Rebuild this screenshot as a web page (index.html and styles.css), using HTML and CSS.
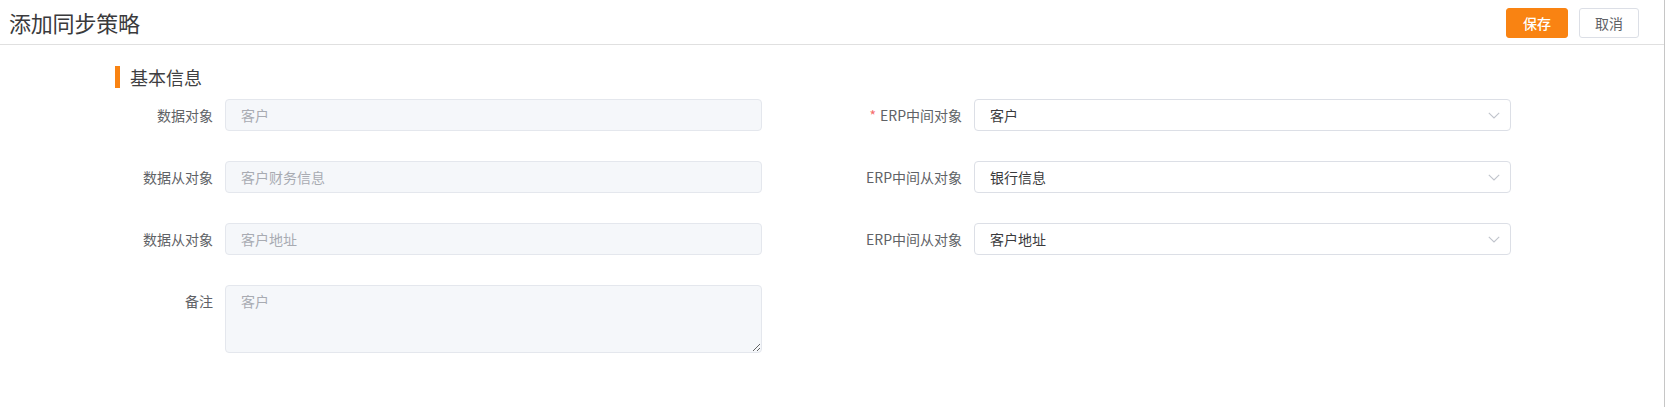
FILE: index.html
```html
<!DOCTYPE html>
<html lang="zh-CN">
<head>
<meta charset="utf-8">
<title>添加同步策略</title>
<link rel="stylesheet" href="styles.css">
</head>
<body>
<div class="page">
  <header class="topbar">
    <h1 class="title">添加同步策略</h1>
    <div class="actions">
      <button class="btn btn-primary" type="button">保存</button>
      <button class="btn btn-default" type="button">取消</button>
    </div>
  </header>
  <main class="content">
    <div class="section-title"><span class="bar"></span><span class="section-text">基本信息</span></div>
    <div class="form">
      <div class="field">
        <label class="label">数据对象</label>
        <div class="input disabled">客户</div>
      </div>
      <div class="field">
        <label class="label"><span class="req">*</span>ERP中间对象</label>
        <div class="input select"><span>客户</span><svg class="arrow" width="12" height="7" viewBox="0 0 12 7"><path d="M0.8 0.8 L6 6 L11.2 0.8" fill="none" stroke="#c0c4cc" stroke-width="1.1"/></svg></div>
      </div>
      <div class="field">
        <label class="label">数据从对象</label>
        <div class="input disabled">客户财务信息</div>
      </div>
      <div class="field">
        <label class="label">ERP中间从对象</label>
        <div class="input select"><span>银行信息</span><svg class="arrow" width="12" height="7" viewBox="0 0 12 7"><path d="M0.8 0.8 L6 6 L11.2 0.8" fill="none" stroke="#c0c4cc" stroke-width="1.1"/></svg></div>
      </div>
      <div class="field">
        <label class="label">数据从对象</label>
        <div class="input disabled">客户地址</div>
      </div>
      <div class="field">
        <label class="label">ERP中间从对象</label>
        <div class="input select"><span>客户地址</span><svg class="arrow" width="12" height="7" viewBox="0 0 12 7"><path d="M0.8 0.8 L6 6 L11.2 0.8" fill="none" stroke="#c0c4cc" stroke-width="1.1"/></svg></div>
      </div>
      <div class="field field-top">
        <label class="label">备注</label>
        <textarea class="textarea" placeholder="客户"></textarea>
      </div>
    </div>
  </main>
</div>
</body>
</html>
```
FILE: styles.css
```css
* { box-sizing: border-box; }
html, body { margin: 0; padding: 0; background: #fff; }
body {
  font-family: "Noto Sans CJK SC", "Noto Sans", sans-serif;
  color: #606266;
}
.page {
  width: 1665px;
  height: 407px;
  border-right: 1px solid #c6c6c6;
  overflow: hidden;
}
.topbar {
  height: 45px;
  border-bottom: 1px solid #e0e0e0;
  display: flex;
  align-items: center;
  justify-content: space-between;
  padding: 0 25px 0 9px;
}
.title {
  margin: 0;
  font-size: 22px;
  font-weight: 400;
  color: #3a3a3c;
  line-height: 30px;
  letter-spacing: -0.2px;
}
.actions { display: flex; gap: 11px; padding-top: 2px; }
.btn {
  height: 30px;
  border-radius: 3px;
  font-family: inherit;
  font-size: 14px;
  line-height: 28px;
  padding: 0;
  cursor: pointer;
}
.btn-primary {
  width: 62px;
  background: #f98312;
  border: 1px solid #f98312;
  color: #fff;
  font-weight: 500;
}
.btn-default {
  width: 60px;
  background: #fff;
  border: 1px solid #dcdfe6;
  color: #606266;
}
.content { padding: 21px 0 0 0; }
.section-title {
  display: flex;
  align-items: center;
  height: 22px;
  padding-left: 115px;
}
.bar { width: 5px; height: 22px; background: #f98312; }
.section-text {
  margin-left: 10px;
  font-size: 18px;
  color: #3f3f42;
  line-height: 22px;
}
.form {
  display: grid;
  grid-template-columns: 669px 657px;
  column-gap: 92px;
  row-gap: 30px;
  padding: 11px 0 0 93px;
}
.field { display: flex; align-items: center; }
.field-top { align-items: flex-start; }
.label {
  flex: 0 0 auto;
  width: 132px;
  padding-right: 12px;
  text-align: right;
  font-size: 14px;
  line-height: 32px;
  color: #606266;
  white-space: nowrap;
}
.field:nth-child(even) .label { width: 120px; }
.req { color: #f56c6c; margin-right: 4px; }
.input {
  width: 537px;
  height: 32px;
  border: 1px solid #dcdfe6;
  border-radius: 4px;
  padding: 0 15px;
  font-size: 14px;
  line-height: 30px;
  display: flex;
  align-items: center;
}
.input.disabled {
  background: #f5f7fa;
  border-color: #e4e7ed;
  color: #a8abb2;
}
.input.select {
  justify-content: space-between;
  color: #3a3a3c;
  padding-right: 10px;
}
.arrow { display: block; }
.textarea {
  width: 537px;
  height: 68px;
  border: 1px solid #e4e7ed;
  border-radius: 4px;
  background: #f5f7fa;
  padding: 5px 15px;
  font-family: inherit;
  font-size: 14px;
  line-height: 21px;
  color: #a8abb2;
  outline: none;
  resize: vertical;
}
.textarea::placeholder { color: #a8abb2; }
```
